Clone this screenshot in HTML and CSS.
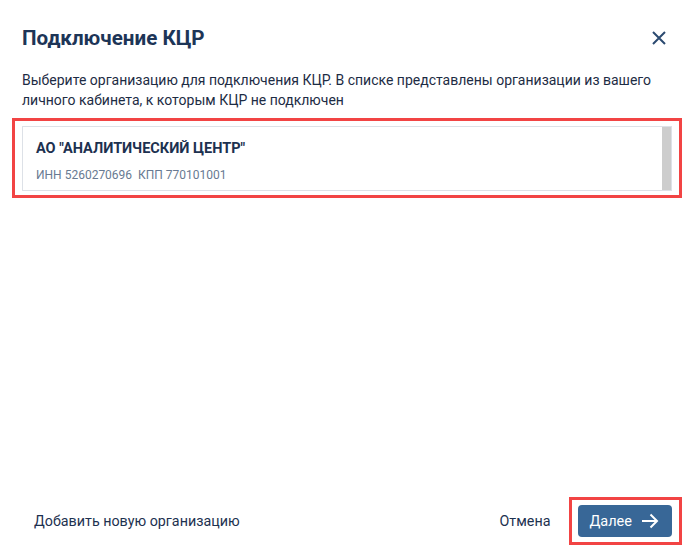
FILE: index.html
```html
<!DOCTYPE html>
<html>
<head>
  <title>Подключение КЦР</title>
  <meta name="viewport" content="width=device-width, initial-scale=1.0">
  <link rel="stylesheet" href="styles.css">
</head>
<body>
  <div class="modal">
    <div class="modal-head">
      <h2>Подключение КЦР</h2>
      <button class="close" aria-label="Закрыть">
        <svg width="16" height="16" viewBox="0 0 16 16"><path d="M2 2L14 14M14 2L2 14" stroke="#2b4a70" stroke-width="2" fill="none"/></svg>
      </button>
    </div>

    <p class="hint">Выберите организацию для подключения КЦР. В списке представлены организации из вашего личного кабинета, к которым КЦР не подключен</p>

    <!-- list of organizations -->
    <div class="mark list-mark">
      <div class="org-list">
        <div class="org">
          <div class="org-name">АО "АНАЛИТИЧЕСКИЙ ЦЕНТР"</div>
          <div class="org-ids">ИНН 5260270696&nbsp;&nbsp;КПП 770101001</div>
        </div>
        <div class="scrollbar"></div>
      </div>
    </div>

    <div class="modal-foot">
      <a class="add-link">Добавить новую организацию</a>
      <div class="actions">
        <button class="cancel">Отмена</button>
        <div class="mark btn-mark">
          <button class="next">Далее
            <svg width="18" height="16" viewBox="0 0 18 16"><path d="M1 8H16M9.5 1.5L16 8L9.5 14.5" stroke="#fff" stroke-width="2" fill="none"/></svg>
          </button>
        </div>
      </div>
    </div>
  </div>
</body>
</html>
```

FILE: styles.css
```css
body {
  margin: 0;
  background-color: #fff;
  font-family: Roboto, "Noto Sans", sans-serif;
  color: #1d3150;
}
.modal {
  width: 695px;
  height: 558px;
  display: flex;
  flex-direction: column;
}
.modal-head {
  display: flex;
  justify-content: space-between;
  align-items: center;
  padding: 26px 28px 0 22px;
}
.modal-head h2 {
  margin: 0;
  font-size: 20.6px;
  font-weight: 700;
  color: #1d3557;
}
.close {
  border: none;
  background: none;
  padding: 0;
  width: 16px;
  height: 16px;
  cursor: pointer;
}
.hint {
  margin: 20px 30px 0 22px;
  font-size: 14px;
  line-height: 20px;
  color: #1d2c44;
}
.mark {
  border: 3px solid #f24444;
}
.list-mark {
  margin: 8px 13px 0 12px;
  padding: 5px 7px 4px 7px;
}
.org-list {
  display: flex;
  border: 1px solid #dde1e7;
  height: 63px;
}
.org {
  flex: 1;
  padding: 13px 13px 0 13px;
}
.org-name {
  font-size: 14.5px;
  font-weight: 700;
  color: #1d3150;
}
.org-ids {
  margin-top: 11px;
  font-size: 12px;
  color: #687a92;
}
.scrollbar {
  width: 9px;
  background-color: #cdcdcd;
}
.modal-foot {
  margin-top: auto;
  display: flex;
  justify-content: space-between;
  align-items: center;
  padding: 0 13px 13px 34px;
}
.add-link {
  font-size: 14.3px;
  color: #1d3150;
  cursor: pointer;
}
.actions {
  display: flex;
  align-items: center;
}
.cancel {
  border: none;
  background: none;
  font-family: inherit;
  font-size: 14.3px;
  color: #1d3150;
  margin-right: 19px;
  padding: 0;
  cursor: pointer;
}
.btn-mark {
  padding: 5px 7px 5px 6px;
}
.next {
  display: flex;
  align-items: center;
  gap: 9px;
  height: 32px;
  padding: 0 13px 0 11px;
  border: none;
  border-radius: 4px;
  background-color: #386797;
  color: #fff;
  font-family: inherit;
  font-size: 14.5px;
  cursor: pointer;
}
```
